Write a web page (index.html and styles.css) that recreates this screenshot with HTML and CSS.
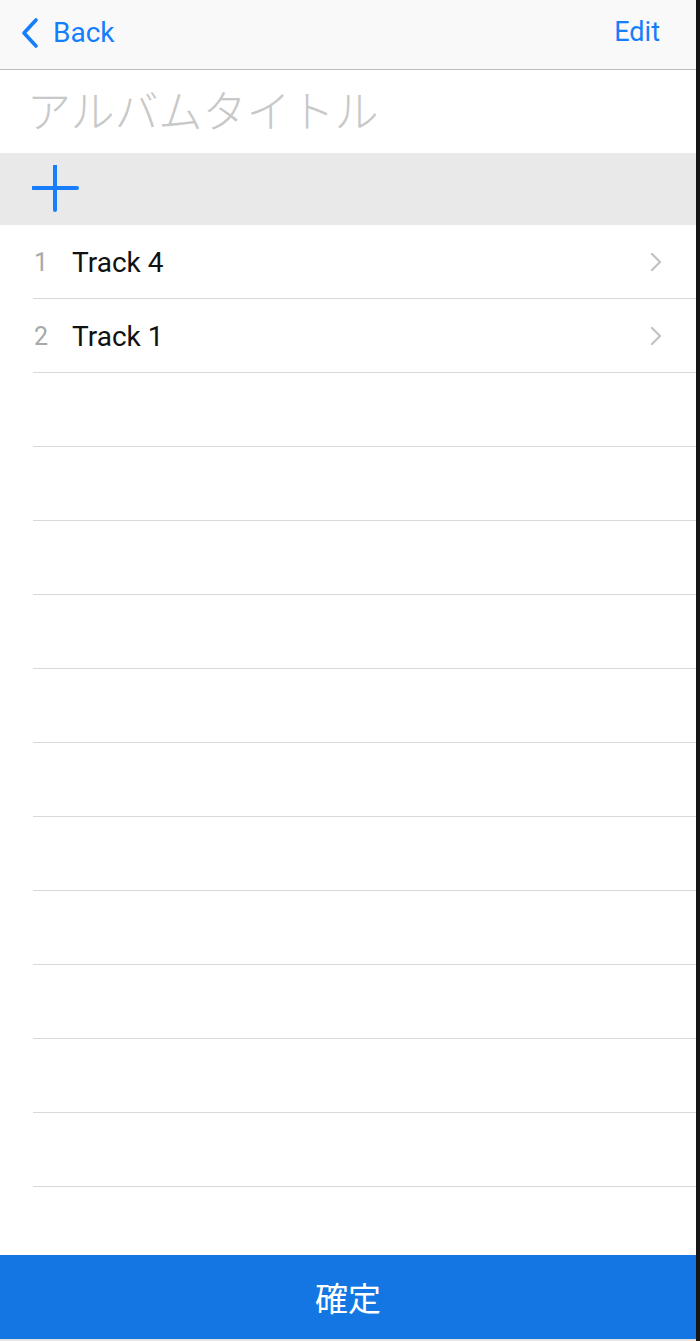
FILE: index.html
```html
<!DOCTYPE html>
<html lang="ja">
<head>
<meta charset="utf-8">
<link rel="stylesheet" href="styles.css">
</head>
<body>
<div class="screen">
  <header class="nav">
    <div class="back">
      <svg class="chev" width="20" height="32" viewBox="0 0 20 32"><path d="M16 3 L4 16 L16 29" fill="none" stroke="#167efb" stroke-width="3.6" stroke-linecap="round" stroke-linejoin="round"/></svg>
      <span>Back</span>
    </div>
    <div class="edit">Edit</div>
  </header>
  <div class="title">アルバムタイトル</div>
  <div class="addbar">
    <svg width="48" height="48" viewBox="0 0 48 48"><path d="M23 1 V45 M1 23 H45" stroke="#167efb" stroke-width="4" stroke-linecap="round"/></svg>
  </div>
  <ul class="list">
    <li class="row"><span class="num">1</span><span class="name">Track 4</span><svg class="arrow" width="12" height="20" viewBox="0 0 12 20"><path d="M2 2 L10 10 L2 18" fill="none" stroke="#c4c4c7" stroke-width="2.4" stroke-linecap="round" stroke-linejoin="round"/></svg></li>
    <li class="row"><span class="num">2</span><span class="name">Track 1</span><svg class="arrow" width="12" height="20" viewBox="0 0 12 20"><path d="M2 2 L10 10 L2 18" fill="none" stroke="#c4c4c7" stroke-width="2.4" stroke-linecap="round" stroke-linejoin="round"/></svg></li>
    <li class="row"></li>
    <li class="row"></li>
    <li class="row"></li>
    <li class="row"></li>
    <li class="row"></li>
    <li class="row"></li>
    <li class="row"></li>
    <li class="row"></li>
    <li class="row"></li>
    <li class="row"></li>
    <li class="row"></li>
  </ul>
  <div class="spacer"></div>
  <div class="confirm">確定</div>
</div>
</body>
</html>
```
FILE: styles.css
```css
html, body {
  margin: 0;
  padding: 0;
  background: #161616;
}
body {
  width: 700px;
  height: 1341px;
  overflow: hidden;
  font-family: "Noto Sans", "Noto Sans CJK JP", sans-serif;
}
.screen {
  width: 696px;
  height: 1341px;
  background: #ffffff;
  display: flex;
  flex-direction: column;
  border-bottom: 2px solid #e4e4e4;
  box-sizing: border-box;
}
.nav {
  height: 70px;
  box-sizing: border-box;
  background: #f9f9f9;
  border-bottom: 1px solid #bdbdbd;
  display: flex;
  align-items: center;
  justify-content: space-between;
  padding: 0 36px 5px 20px;
  flex-shrink: 0;
}
.back {
  display: flex;
  align-items: center;
  gap: 13px;
  color: #167efb;
  font-family: "Roboto", "Liberation Sans", sans-serif;
  font-size: 28px;
}
.chev { margin-top: 2px; }
.edit {
  color: #167efb;
  font-family: "Roboto", "Liberation Sans", sans-serif;
  font-size: 27px;
}
.title {
  height: 83px;
  flex-shrink: 0;
  box-sizing: border-box;
  padding: 11px 0 0 27px;
  font-family: "Noto Sans CJK JP", sans-serif;
  font-size: 44px;
  line-height: 56px;
  color: #c8c8c8;
  font-weight: 300;
}
.addbar {
  height: 72px;
  flex-shrink: 0;
  background: #e9e9e9;
  display: flex;
  align-items: center;
  padding-left: 32px;
}
.list {
  list-style: none;
  margin: 0;
  padding: 0;
}
.row {
  height: 74px;
  box-sizing: border-box;
  border-bottom: 1px solid #d9d9d9;
  margin-left: 33px;
  display: flex;
  align-items: center;
  padding-right: 34px;
}
.num {
  color: #a8a8a8;
  font-family: "Roboto", "Liberation Sans", sans-serif;
  font-size: 25px;
  margin-left: 1px;
  margin-top: 2px;
}
.name {
  color: #111111;
  font-family: "Roboto", "Liberation Sans", sans-serif;
  font-size: 28px;
  margin-left: 24px;
  margin-top: 2px;
  flex: 1;
}
.arrow { flex-shrink: 0; }
.spacer { flex: 1; }
.confirm {
  height: 84px;
  flex-shrink: 0;
  background: #1476e3;
  color: #ffffff;
  display: flex;
  align-items: center;
  justify-content: center;
  font-family: "Noto Sans CJK JP", sans-serif;
  font-size: 33px;
  font-weight: 400;
}
```
